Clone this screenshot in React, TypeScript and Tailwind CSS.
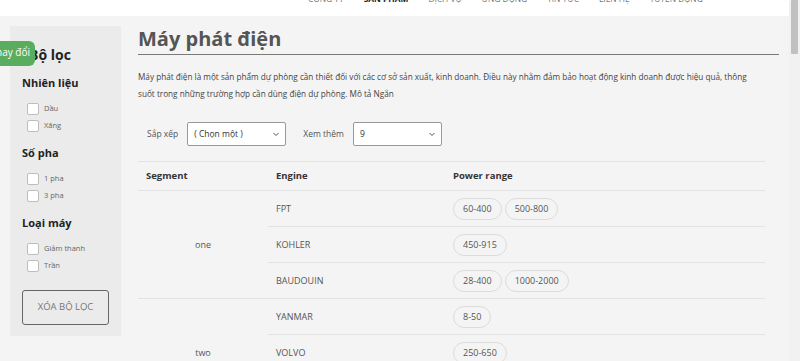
const navItems = ["Công ty", "Sản phẩm", "Dịch vụ", "Ứng dụng", "Tin tức", "Liên hệ", "Tuyển dụng"];

const filters = [
  { title: "Nhiên liệu", options: ["Dầu", "Xăng"] },
  { title: "Số pha", options: ["1 pha", "3 pha"] },
  { title: "Loại máy", options: ["Giảm thanh", "Trần"] },
];

const segments = [
  {
    name: "one",
    rows: [
      { engine: "FPT", ranges: ["60-400", "500-800"] },
      { engine: "KOHLER", ranges: ["450-915"] },
      { engine: "BAUDOUIN", ranges: ["28-400", "1000-2000"] },
    ],
  },
  {
    name: "two",
    rows: [
      { engine: "YANMAR", ranges: ["8-50"] },
      { engine: "VOLVO", ranges: ["250-650"] },
      { engine: "MITSUBISHI", ranges: ["800-2250"] },
    ],
  },
];

const Chevron = () => (
  <svg width="8" height="8" viewBox="0 0 8 8" className="text-[#555]">
    <path d="M1.5 3 L4 5.5 L6.5 3" fill="none" stroke="currentColor" strokeWidth="1" />
  </svg>
);

const Sidebar = () => (
  <aside className="relative w-[111px] h-[310px] shrink-0 bg-[#ebebeb] px-3 pt-[19px]">
    <h3 className="pl-[7px] text-[14px] leading-[20px] font-bold text-[#222]">Bộ lọc</h3>
    {/* green tab over the title */}
    <div className="absolute left-[-10px] top-[15px] h-[25px] w-[35px] overflow-hidden rounded-r-md bg-[#5aad5e]">
      <span className="absolute right-[5px] top-[4px] whitespace-nowrap text-[10px] leading-[14px] text-white">
        Thay đổi
      </span>
    </div>

    {filters.map((f, i) => (
      <div key={f.title} className={i === 0 ? "mt-[10px]" : "mt-[13px]"}>
        <h4 className="text-[11px] leading-[16px] font-bold text-[#222]">{f.title}</h4>
        <div className="mt-[12px] flex flex-col gap-[5px] pl-[5px]">
          {f.options.map((o) => (
            <label key={o} className="flex h-[12px] items-center gap-[5px]">
              <span className="h-[12px] w-[12px] rounded-[2px] border border-[#bdbdbd] bg-white" />
              <span className="text-[7.5px] text-[#666]">{o}</span>
            </label>
          ))}
        </div>
      </div>
    ))}

    <button className="mt-[18px] h-[35px] w-[87px] rounded-[3px] border border-[#666] text-[9.5px] text-[#777]">
      XÓA BỘ LỌC
    </button>
  </aside>
);

const Select = ({ value, width }: { value: string; width: string }) => (
  <div
    className={`flex h-[24px] items-center justify-between rounded-[2px] border border-[#999] bg-white pl-[6px] pr-[5px] text-[8.5px] text-[#333] ${width}`}
  >
    <span>{value}</span>
    <Chevron />
  </div>
);

const App = () => {
  return (
    <div className="flex h-[361px] overflow-hidden bg-[#f4f4f4] font-['Open_Sans',sans-serif]">
      <div className="min-w-0 flex-1">
        <header className="h-4 overflow-hidden bg-white">
          <nav className="-mt-[7px] flex gap-[20px] pl-[308px] text-[8.4px] leading-[12px] uppercase text-[#777]">
            {navItems.map((n) => (
              <span key={n} className={n === "Sản phẩm" ? "font-bold text-[#222]" : ""}>
                {n}
              </span>
            ))}
          </nav>
        </header>

        <div className="flex gap-[17px] pl-[10px] pt-[10px]">
          <Sidebar />

          <main className="w-[641px]">
            <h1 className="border-b-[1.5px] border-[#7a7a7a] pb-[2px] text-[20px] leading-[26px] font-bold text-[#555]">
              Máy phát điện
            </h1>
            <p className="mt-[13px] pr-[15px] text-[8.2px] leading-[17px] text-[#444]">
              Máy phát điện là một sản phẩm dự phòng cần thiết đối với các cơ sở sản xuất, kinh doanh. Điều này nhằm đảm bảo hoạt động kinh doanh được hiệu quả, thông suốt trong những trường hợp cần dùng điện dự phòng. Mô tả Ngắn
            </p>

            <div className="mt-[20px] flex items-center pl-[9px] text-[8.5px] text-[#555]">
              <span>Sắp xếp</span>
              <div className="ml-[9px]">
                <Select value="( Chọn một )" width="w-[99px]" />
              </div>
              <span className="ml-[17px]">Xem thêm</span>
              <div className="ml-[9px]">
                <Select value="9" width="w-[89px]" />
              </div>
            </div>

            <table className="mt-[15px] w-[627px] table-fixed border-collapse">
              <colgroup>
                <col className="w-[130px]" />
                <col className="w-[177px]" />
                <col />
              </colgroup>
              <thead>
                <tr className="border-t border-[#e3e3e3] text-left text-[9.5px] text-[#333]">
                  <th className="h-[29px] pl-[8px] pt-[1px] font-bold">Segment</th>
                  <th className="pl-[8px] pt-[1px] font-bold">Engine</th>
                  <th className="pl-[8px] pt-[1px] font-bold">Power range</th>
                </tr>
              </thead>
              <tbody className="text-[9px] text-[#555]">
                {segments.map((s) =>
                  s.rows.map((r, i) => (
                    <tr key={r.engine}>
                      {i === 0 && (
                        <td rowSpan={s.rows.length} className="border-t border-[#e3e3e3] text-center align-middle">
                          {s.name}
                        </td>
                      )}
                      <td className="h-[36px] border-t border-[#e3e3e3] pl-[8px]">{r.engine}</td>
                      <td className="border-t border-[#e3e3e3] pl-[8px]">
                        <div className="flex gap-[3px]">
                          {r.ranges.map((p) => (
                            <span
                              key={p}
                              className="flex h-[22px] items-center rounded-full border border-[#dcdcdc] px-[9px]"
                            >
                              {p}
                            </span>
                          ))}
                        </div>
                      </td>
                    </tr>
                  ))
                )}
              </tbody>
            </table>
          </main>
        </div>
      </div>

      {/* page scrollbar */}
      <div className="w-[11px] shrink-0 bg-[#f1f1f1] px-[2px]">
        <div className="h-[54px] rounded-[1px] bg-[#c1c1c1]" />
      </div>
    </div>
  );
};

export default App;
